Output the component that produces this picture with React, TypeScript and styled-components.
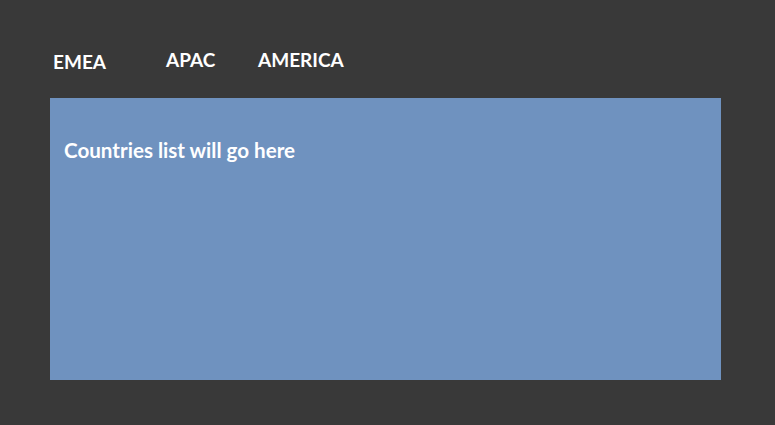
import React, { useState } from "react";
import styled, { createGlobalStyle } from "styled-components";

const Global = createGlobalStyle`
  html, body { margin: 0; padding: 0; background: #393939; }
  body { font-family: Lato, "Open Sans", "Liberation Sans", sans-serif; }
`;

const Page = styled.div`
  width: 775px;
  height: 425px;
  background: #393939;
  padding: 48px 54px 0 50px;
  box-sizing: border-box;
  display: flex;
  flex-direction: column;
`;

const Tabs = styled.nav`
  display: flex;
  align-items: flex-start;
  height: 50px;
`;

const Tab = styled.button<{ $active?: boolean; $width: number }>`
  background: none;
  border: none;
  padding: ${(p) => (p.$active ? "2px 0 0 3px" : "0")};
  width: ${(p) => p.$width}px;
  text-align: left;
  color: #ffffff;
  font-family: Lato, "Open Sans", "Liberation Sans", sans-serif;
  font-weight: 700;
  font-size: 19px;
  line-height: 24px;
  cursor: pointer;
`;

const Panel = styled.section`
  width: 671px;
  height: 282px;
  background: #6f92bf;
  padding: 40px 14px;
  box-sizing: border-box;
`;

const PanelText = styled.h2`
  margin: 0;
  color: #ffffff;
  font-weight: 700;
  font-size: 20.6px;
  line-height: 24px;
`;

const tabs = [
  { name: "EMEA", width: 116 },
  { name: "APAC", width: 92 },
  { name: "AMERICA", width: 100 },
];

export default function App() {
  const [active, setActive] = useState("EMEA");
  return (
    <>
      <Global />
      <Page>
        <Tabs>
          {tabs.map((t) => (
            <Tab
              key={t.name}
              $width={t.width}
              $active={active === t.name}
              onClick={() => setActive(t.name)}
            >
              {t.name}
            </Tab>
          ))}
        </Tabs>
        <Panel>
          <PanelText>Countries list will go here</PanelText>
        </Panel>
      </Page>
    </>
  );
}
